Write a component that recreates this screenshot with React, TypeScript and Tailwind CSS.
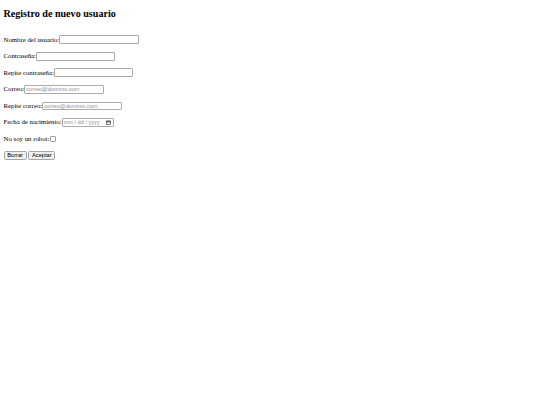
import React from "react";

const inputCls =
  "box-border h-[8.6px] w-[79.5px] border border-[#ababab] rounded-[1px] bg-white px-[1px] text-[5.6px] font-['Liberation_Sans',Arial,sans-serif] text-black placeholder:text-[#8f8f8f] outline-none";

function Row({ children }: { children: React.ReactNode }) {
  return <p className="flex h-[10px] items-center whitespace-nowrap">{children}</p>;
}

const btnCls =
  "box-border h-[8.6px] rounded-[1.5px] border border-[#a5a5a5] bg-[#efefef] px-[2.7px] font-['Liberation_Sans',Arial,sans-serif] text-[5.7px] leading-none text-black";

export default function App() {
  return (
    <div className="min-h-[405px] w-[540px] bg-white pl-[3.5px] pt-[8px] font-['Liberation_Serif','Times_New_Roman',serif] text-[6.8px] text-black">
      <h2 className="text-[10.1px] font-bold leading-[11.5px]">Registro de nuevo usuario</h2>
      <form className="mt-[15.2px] flex flex-col gap-[6.55px]" onSubmit={(e) => e.preventDefault()}>
        <Row>
          <label htmlFor="nombre">Nombre del usuario:</label>
          <input id="nombre" type="text" className={inputCls} />
        </Row>
        <Row>
          <label htmlFor="pass">Contraseña:</label>
          <input id="pass" type="password" className={inputCls} />
        </Row>
        <Row>
          <label htmlFor="pass2">Repite contraseña:</label>
          <input id="pass2" type="password" className={inputCls} />
        </Row>
        <Row>
          <label htmlFor="correo">Correo:</label>
          <input id="correo" type="email" placeholder="correo@dominio.com" className={inputCls} />
        </Row>
        <Row>
          <label htmlFor="correo2">Repite correo:</label>
          <input id="correo2" type="email" placeholder="correo@dominio.com" className={inputCls} />
        </Row>
        <Row>
          <label htmlFor="fecha">Fecha de nacimiento:</label>
          <span className="box-border flex h-[8.6px] w-[52px] items-center justify-between border border-[#ababab] rounded-[1px] bg-white pl-[1px] pr-[2px] font-['Liberation_Sans',Arial,sans-serif] text-[5.6px] text-[#8f8f8f]">
            <span id="fecha">mm / dd / yyyy</span>
            <svg width="5" height="5" viewBox="0 0 10 10" fill="none" stroke="#222" strokeWidth="1.2">
              <rect x="1" y="1.8" width="8" height="7.4" />
              <line x1="1" y1="3.8" x2="9" y2="3.8" strokeWidth="1.8" />
            </svg>
          </span>
        </Row>
        <Row>
          <label htmlFor="robot">No soy un robot:</label>
          <input
            id="robot"
            type="checkbox"
            className="ml-[1px] box-border h-[5.4px] w-[5.4px] appearance-none border border-[#a5a5a5] rounded-[1px] bg-white"
          />
        </Row>
        <Row>
          <button type="reset" className={btnCls}>
            Borrar
          </button>
          <button type="submit" className={"ml-[1.7px] " + btnCls}>
            Aceptar
          </button>
        </Row>
      </form>
    </div>
  );
}
